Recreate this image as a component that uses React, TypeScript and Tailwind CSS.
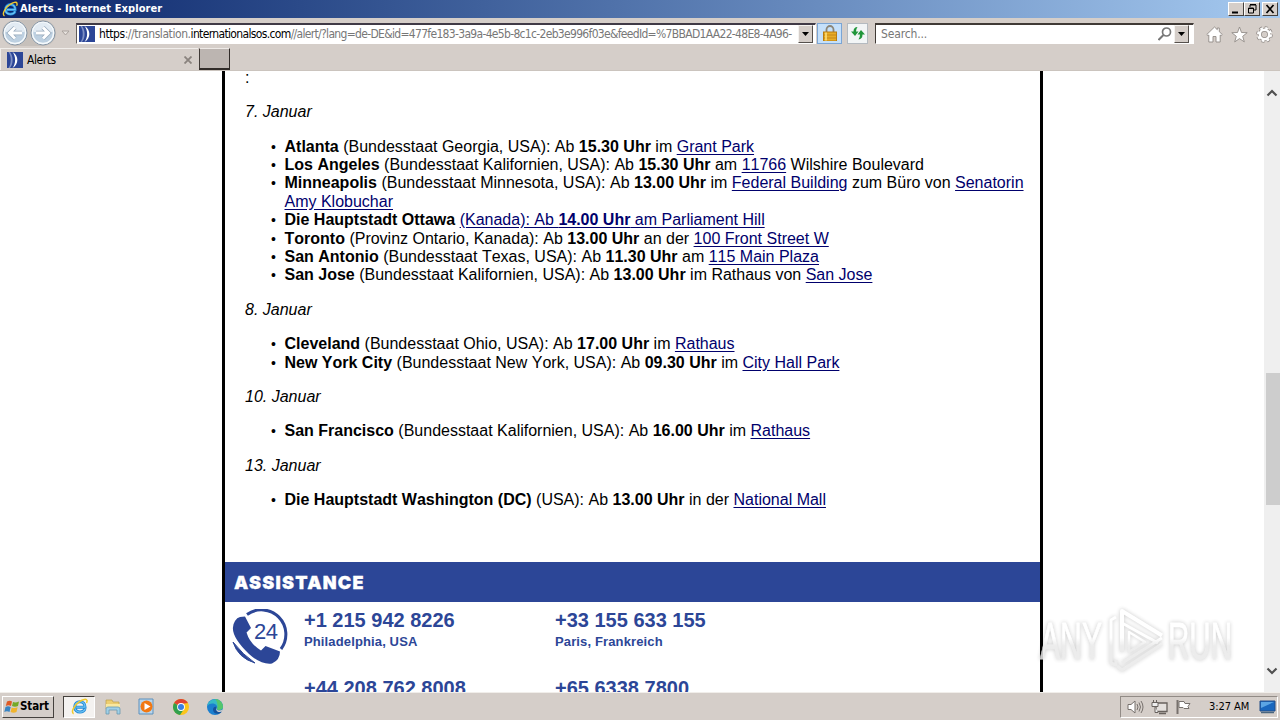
import React from "react";

const UI_FONT = "font-['DejaVu_Sans_Condensed','DejaVu_Sans',sans-serif] [font-stretch:condensed]";

const IeIcon = ({ className }: { className?: string }) => (
  <svg viewBox="0 0 16 16" className={className}>
    <path
      d="M13.2 10.3c-.8 1.8-2.5 2.9-4.7 2.9-3 0-5-2-5-4.7C3.500 5.500 5.600 3.500 8.500 3.500c3 0 4.800 2 4.700 5.100H5"
      fill="none"
      stroke="#2389d6"
      strokeWidth="2.800"
    />
    <path
      d="M13.2 10.3c-.8 1.8-2.5 2.9-4.7 2.9-3 0-5-2-5-4.7C3.500 5.500 5.600 3.500 8.500 3.500c3 0 4.800 2 4.700 5.100H5"
      fill="none"
      stroke="#6cc4f4"
      strokeWidth="1.200"
    />
    <path
      d="M2.500 14.800C-.5 13.500 2.800 7 8 3.500c3-2.200 6.500-3 7-1.300.3.800 0 1.700-.4 2.500"
      fill="none"
      stroke="#f1c92c"
      strokeWidth="1.400"
    />
  </svg>
);

const SosIcon = () => (
  <svg viewBox="0 0 16 16" className="size-4 shrink-0">
    <rect width="16" height="16" fill="#2c4697" />
    <path d="M3 0c3.500 4 3.500 12 0 16H1.500c3-4 3-12 0-16Z" fill="#7f90c4" />
    <path d="M5.500 0c6.500 3.500 6.500 12.500 0 16C9 11.500 9 4.500 5.500 0Z" fill="#fff" />
  </svg>
);

const NavArrow = ({ flip }: { flip?: boolean }) => (
  <svg viewBox="0 0 26 26" className={flip ? "size-[26px] -scale-x-100" : "size-[26px]"}>
    <circle cx="13" cy="13" r="12" fill="#dce5ed" stroke="#8796a5" />
    <circle cx="13" cy="13" r="10.500" fill="#bdd0e1" stroke="#f6fafc" strokeWidth="1.300" />
    <path d="M3.500 12a9.500 9.500 0 0 1 19 0Z" fill="#e2ebf3" />
    <path d="M13 7.500 7.500 13l5.500 5.500M8 13h12" fill="none" stroke="#96a9bb" strokeWidth="4.500" />
    <path d="M13 7.500 7.500 13l5.500 5.500M8 13h12" fill="none" stroke="#fff" strokeWidth="3" />
  </svg>
);

const DropButton = () => (
  <div className="flex h-[18px] w-[15px] shrink-0 items-center justify-center border border-t-[#f5f3f0] border-l-[#f5f3f0] border-r-[#55504c] border-b-[#55504c] bg-[#d5cec9]">
    <svg viewBox="0 0 7 4" className="h-1 w-[7px]">
      <path d="M0 0h7L3.500 4Z" fill="#000" />
    </svg>
  </div>
);

const WindowButton = ({ children }: { children: React.ReactNode }) => (
  <div className="flex h-[14px] w-4 items-center justify-center border border-t-white border-l-white border-r-[#45413d] border-b-[#45413d] bg-[#d5cec9]">
    <svg viewBox="0 0 12 12" className="size-3" fill="none" stroke="#000">
      {children}
    </svg>
  </div>
);

const TitleBar = () => (
  <div className="flex h-[18px] items-center bg-linear-to-r from-[#0c246a] to-[#a6caf0] pr-[2px] pl-[2px]">
    <IeIcon className="size-4" />
    <span className="mt-px ml-[2px] grow text-[11px] font-bold tracking-[0.080px] text-white">
      Alerts - Internet Explorer
    </span>
    <div className="flex">
      <WindowButton>
        <path d="M2 9.500h6" strokeWidth="2" />
      </WindowButton>
      <WindowButton>
        <path d="M4 4V2h6v5H8M4 1.500h6" />
        <path d="M2.500 5h5v5h-5ZM2 5.500h6" />
      </WindowButton>
      <div className="ml-[2px]">
        <WindowButton>
          <path d="m2.500 2 7 8M9.500 2l-7 8" strokeWidth="1.700" />
        </WindowButton>
      </div>
    </div>
  </div>
);

const Toolbar = () => (
  <div className="flex h-[30px] items-center bg-[#d5cec9] pl-[2px]">
    <div className="flex h-[26px] w-[54px] gap-[2px] rounded-full bg-[#c6c0bb]">
      <NavArrow />
      <NavArrow flip />
    </div>
    <svg viewBox="0 0 9 6" className="ml-[5px] h-[6px] w-[9px]">
      <path d="M1 1h7L4.500 5Z" fill="#e7e2de" stroke="#aaa39e" />
    </svg>
    <div className="ml-[6px] flex h-[21px] w-[740px] items-center border border-t-2 border-t-[#403a46] border-l-[#605b58] border-r-white border-b-white bg-white pl-[2px]">
      <SosIcon />
      <div className="ml-1 w-[699px] shrink-0 text-[12px] tracking-[-0.430px] whitespace-nowrap text-[#777]">
        <span className="text-black">https</span>://translation.
        <span className="tracking-[-0.650px] text-black">internationalsos.com</span>
        <span className="tracking-[-0.680px]">
          //alert/?lang=de-DE&amp;id=477fe183-3a9a-4e5b-8c1c-2eb3e996f03e&amp;feedId=%7BBAD1AA22-48E8-4A96-
        </span>
      </div>
      <DropButton />
    </div>
    <div className="ml-px flex h-[21px] w-[25px] items-center justify-center border border-[#7aa5d5] bg-[#c5e0fa]">
      <svg viewBox="0 0 14 16" className="h-4 w-[14px]">
        <path d="M3.500 8V4.500a3.500 3.500 0 0 1 7 0V8" fill="none" stroke="#8c8577" strokeWidth="1.800" />
        <rect x=".5" y="7" width="13" height="9" fill="#e9ad25" stroke="#b97d10" />
        <path d="M1 10h12M1 13h12" stroke="#c58719" />
        <path d="M3 7.500v8" stroke="#ffe482" strokeWidth="1.500" />
      </svg>
    </div>
    <div className="ml-[5px] flex size-[21px] items-center justify-center border border-[#b4bac0] bg-[#f2f5f6]">
      <svg viewBox="0 0 16 16" className="size-4">
        <path d="M7.500 2Q3.500 2 3.500 6.500H1L5 11 8.500 6.500H6Q6 4 7.500 2Z" fill="#20963a" />
        <path d="M8.500 14.500Q12.500 14 12.500 9.500H15L11 5 7.500 9.500H10Q10 12.500 8.500 14.500Z" fill="#20963a" />
      </svg>
    </div>
    <div className="ml-[7px] flex h-[21px] w-[319px] items-center border border-t-2 border-t-[#403a36] border-l-[#403a36] border-r-white border-b-white bg-white">
      <span className="ml-[5px] grow text-[12px] tracking-[-0.150px] text-[#777]">Search...</span>
      <svg viewBox="0 0 14 14" className="mr-[2px] size-[14px]" fill="none" stroke="#777">
        <circle cx="8.500" cy="5" r="4" strokeWidth="1.700" />
        <path d="m5.500 8-5 5" strokeWidth="2" />
      </svg>
      <DropButton />
      <div className="w-1" />
    </div>
    <div className="mt-[3px] ml-[12px] flex gap-[8px]">
      <svg viewBox="0 0 17 17" className="size-[17px]">
        <path
          d="M.8 8.500 8.500 1l2.800 2.700V2h2v3.700l3 2.800-1.200 1.200-.9-.7v7H10V10.500H7V16H2.800V9l-.8.700Z"
          fill="#fff"
          stroke="#918b87"
          strokeWidth=".9"
        />
      </svg>
      <svg viewBox="0 0 17 17" className="size-[17px]">
        <path
          d="m8.500 1 2 5.500 5.700.2-4.500 3.600 1.600 5.600-4.800-3.300-4.800 3.300 1.600-5.600L.8 6.700l5.700-.2Z"
          fill="#fff"
          stroke="#918b87"
          strokeWidth=".9"
        />
      </svg>
      <svg viewBox="0 0 17 17" className="size-[17px]" fill="none">
        <circle cx="8.500" cy="8.500" r="6.800" stroke="#918b87" strokeWidth="3" strokeDasharray="3 2.340" />
        <circle cx="8.500" cy="8.500" r="4.700" stroke="#918b87" strokeWidth="4" />
        <circle cx="8.500" cy="8.500" r="6.500" stroke="#fff" strokeWidth="2" strokeDasharray="2.600 2.505" />
        <circle cx="8.500" cy="8.500" r="4.700" stroke="#fff" strokeWidth="2.500" />
      </svg>
    </div>
  </div>
);

const TabBar = () => (
  <div className="flex h-[23px] border-b border-[#cbc4be] bg-[#d5cec9]">
    <div className="flex h-[22px] w-[198px] items-center border-t border-l border-[#f1eeeb] pl-[6px]">
      <SosIcon />
      <span className="ml-1 grow text-[12px] tracking-[-0.450px] text-black">Alerts</span>
      <svg viewBox="0 0 8 8" className="mr-[6px] size-2">
        <path d="m.5.5 7 7m0-7-7 7" stroke="#8a837e" strokeWidth="1.800" />
      </svg>
    </div>
    <div className="ml-px h-[22px] w-[31px] border border-t-[#eeeae7] border-l-[#403a36] border-r-[#302b28] border-b-2 border-b-[#302b28] bg-[#bcb5b1]" />
  </div>
);

type Stop = {
  city: string;
  region?: string;
  time?: string;
  body?: React.ReactNode;
};

const Link = ({ children }: { children: React.ReactNode }) => (
  <a className="text-[#00006c] underline underline-offset-2">{children}</a>
);

const schedule: { date: string; stops: Stop[] }[] = [
  {
    date: "7. Januar",
    stops: [
      { city: "Atlanta", region: "(Bundesstaat Georgia, USA)", time: "15.30 Uhr", body: <>im <Link>Grant Park</Link></> },
      {
        city: "Los Angeles",
        region: "(Bundesstaat Kalifornien, USA)",
        time: "15.30 Uhr",
        body: <>am <Link>11766</Link> Wilshire Boulevard</>,
      },
      {
        city: "Minneapolis",
        region: "(Bundesstaat Minnesota, USA)",
        time: "13.00 Uhr",
        body: <>im <Link>Federal Building</Link> zum Büro von <Link>Senatorin<br />Amy Klobuchar</Link></>,
      },
      {
        city: "Die Hauptstadt Ottawa",
        body: <Link>(Kanada): Ab <b>14.00 Uhr</b> am Parliament Hill</Link>,
      },
      { city: "Toronto", region: "(Provinz Ontario, Kanada)", time: "13.00 Uhr", body: <>an der <Link>100 Front Street W</Link></> },
      { city: "San Antonio", region: "(Bundesstaat Texas, USA)", time: "11.30 Uhr", body: <>am <Link>115 Main Plaza</Link></> },
      {
        city: "San Jose",
        region: "(Bundesstaat Kalifornien, USA)",
        time: "13.00 Uhr",
        body: <>im Rathaus von <Link>San Jose</Link></>,
      },
    ],
  },
  {
    date: "8. Januar",
    stops: [
      { city: "Cleveland", region: "(Bundesstaat Ohio, USA)", time: "17.00 Uhr", body: <>im <Link>Rathaus</Link></> },
      { city: "New York City", region: "(Bundesstaat New York, USA)", time: "09.30 Uhr", body: <>im <Link>City Hall Park</Link></> },
    ],
  },
  {
    date: "10. Januar",
    stops: [
      { city: "San Francisco", region: "(Bundesstaat Kalifornien, USA)", time: "16.00 Uhr", body: <>im <Link>Rathaus</Link></> },
    ],
  },
  {
    date: "13. Januar",
    stops: [
      { city: "Die Hauptstadt Washington (DC)", region: "(USA)", time: "13.00 Uhr", body: <>in der <Link>National Mall</Link></> },
    ],
  },
];

const Schedule = () => (
  <div className="-mt-[2.300px] h-[493.300px] shrink-0 pl-5 text-[16px] leading-[18.4px] text-black [font-kerning:none]">
    <p className="mb-4">:</p>
    {schedule.map((day) => (
      <React.Fragment key={day.date}>
        <p className="mb-4 italic">{day.date}</p>
        <ul className="mb-4 pl-[26px]">
          {day.stops.map((stop) => (
            <li key={stop.city} className="flex whitespace-nowrap">
              <span className="w-[13.500px] shrink-0 text-[14px]">•</span>
              <span>
                <b>{stop.city}</b> {stop.region && <>{stop.region}: Ab </>}
                {stop.time && <><b>{stop.time}</b> </>}
                {stop.body}
              </span>
            </li>
          ))}
        </ul>
      </React.Fragment>
    ))}
  </div>
);

const PhoneIcon = () => (
  <svg viewBox="0 0 56 56" className="-mt-px size-14">
    <path d="M15 5.500A24.500 24.500 0 0 1 49 40" fill="none" stroke="#2c4697" strokeWidth="3" />
    <path d="M1 33Q6 49 23 54Q11 46 1 33Z" fill="#2c4697" stroke="#2c4697" />
    <path
      d="M8 8 13 7.500 19 19 14.500 23.500Q18 35 29 41.500L33.500 37 48 42.500Q48 51 40 54.500Q29 56 17 45Q-5 24 3 12Q5 8.500 8 8Z"
      fill="#2c4697"
    />
    <text x="22" y="29.500" fontSize="22" fill="#2c4697" letterSpacing="-0.500">
      24
    </text>
  </svg>
);

const Contact = ({ phone, place }: { phone: string; place?: string }) => (
  <div className="h-[67.500px] w-[251px] font-bold text-[#2c4697] [font-kerning:none]">
    <div className="text-[20px] leading-[23px]">{phone}</div>
    <div className="text-[13px] leading-[20px] tracking-[0.130px]">{place}</div>
  </div>
);

const Assistance = () => (
  <div className="shrink-0">
    <div className="flex h-10 items-center bg-[#2c4697] pt-px pl-[9px] font-['Inter',sans-serif] text-[18px] font-black tracking-[1.250px] text-white">
      <span className="[-webkit-text-stroke:0.300px_white]">ASSISTANCE</span>
    </div>
    <div className="flex pt-2 pl-[7px]">
      <PhoneIcon />
      <div className="-mt-px ml-4 grid grid-cols-[251px_251px]">
        <Contact phone="+1 215 942 8226" place="Philadelphia, USA" />
        <Contact phone="+33 155 633 155" place="Paris, Frankreich" />
        <Contact phone="+44 208 762 8008" />
        <Contact phone="+65 6338 7800" />
      </div>
    </div>
  </div>
);

const ScrollBar = () => (
  <div className="flex w-4 shrink-0 flex-col items-center bg-[#efefef] pt-[18px] pb-[17px]">
    <svg viewBox="0 0 12 8" className="h-2 w-3" fill="none" stroke="#505050" strokeWidth="2.200">
      <path d="m1.500 6.500 4.500-4.500 4.500 4.500" />
    </svg>
    <div className="mt-[276px] ml-px h-[132px] w-[14px] bg-[#cdcdcd]" />
    <svg viewBox="0 0 12 8" className="mt-auto h-2 w-3" fill="none" stroke="#505050" strokeWidth="2.200">
      <path d="m1.500 1.500 4.500 4.500 4.500-4.500" />
    </svg>
  </div>
);

// Translucent mark lying over the page and its right border
const Watermark = () => (
  <svg
    viewBox="0 0 210 80"
    className="absolute top-[600px] left-[1034px] h-[80px] w-[210px] drop-shadow-[0_0_2px_rgba(0,0,0,0.25)]"
    fill="none"
    stroke="url(#fade)"
    strokeLinejoin="round"
    opacity=".85"
  >
    <defs>
      <linearGradient id="fade" gradientUnits="userSpaceOnUse" x1="0" y1="38" x2="0" y2="46">
        <stop offset="0" stopColor="#fff" />
        <stop offset="1" stopColor="#e9e9e9" />
      </linearGradient>
    </defs>
    <g fontSize="51" strokeWidth=".8" fill="url(#fade)" fontFamily="'Liberation Sans Narrow','Liberation Sans',sans-serif">
      <text x="6" y="59" textLength="62" lengthAdjust="spacingAndGlyphs">ANY</text>
      <text x="134" y="59" textLength="64" lengthAdjust="spacingAndGlyphs">RUN</text>
    </g>
    <path d="M88 52V11L128 35.500" strokeWidth="4" />
    <path d="M88 23 124 43" strokeWidth="3" />
    <path d="M128 38 88 63M128 44 88 70 83 66" strokeWidth="3" />
    <path d="M82 17 77 20V63L82 65V60" strokeWidth="3" />
    <path d="M95 32V52L111 42Z" strokeWidth="2.500" />
  </svg>
);

const TaskBar = () => (
  <div className="flex h-7 items-center border-t border-[#f1eeea] bg-[#d5cec9] pl-[2px]">
    <div className="flex h-[22px] w-[52px] items-center border border-t-white border-l-white border-r-[#45413d] border-b-[#45413d]">
      <svg viewBox="0 0 16 16" className="ml-px size-4 shrink-0">
        <path d="M3 2.500Q6 1 8 2.500L7 7Q4.500 5.700 1.800 7Z" fill="#df5a25" />
        <path d="M9 3Q11.500 4 15 2.500L14 7Q11 8.500 8 7Z" fill="#75a928" />
        <path d="M1.500 8Q4 6.700 6.700 8L5.500 13Q3 11.500.3 13Z" fill="#3884c3" />
        <path d="M7.700 8.500Q10.500 9.700 13.600 8.300L12.500 13Q9.500 14.500 6.600 13Z" fill="#f1b42c" />
      </svg>
      <span className="mt-px text-[11.500px] font-bold tracking-[-0.100px]">Start</span>
    </div>
    <div className="ml-[9px] flex h-[22px] w-8 items-center justify-center border border-t-[#45413d] border-l-[#45413d] border-r-white border-b-white bg-[#f4f2f0]">
      <IeIcon className="size-[17px]" />
    </div>
    <svg viewBox="0 0 18 18" className="ml-[9px] size-[18px]">
      <path d="M2 2h6l1 2h6v7H2Z" fill="#edce70" stroke="#bd9d49" strokeWidth=".7" />
      <path d="M2 6h14v6H2Z" fill="#f9e8a0" />
      <path d="M2 16v-5q0-2 2-2h10q2 0 2 2v5h-3v-4H5v4Z" fill="#9fd0e8" stroke="#6999b0" strokeWidth=".8" />
    </svg>
    <svg viewBox="0 0 18 18" className="ml-4 size-[18px]">
      <path d="M1 1h14v15H1Z" fill="#b9d5eb" stroke="#5c91bd" />
      <circle cx="8.500" cy="8.500" r="6" fill="#f27812" />
      <path d="m6.500 5 6 3.500-6 3.500Z" fill="#fff" />
    </svg>
    <svg viewBox="0 0 16 16" className="ml-[17px] size-4">
      <circle cx="8" cy="8" r="8" fill="#fbc51b" />
      <path d="M8 8 1.100 4A8 8 0 0 1 14.900 4L8 5Z" fill="#de4334" />
      <path d="M8 8 1.100 4A8 8 0 0 0 7 16l4-6Z" fill="#31a04e" />
      <circle cx="8" cy="8" r="3.900" fill="#fff" />
      <circle cx="8" cy="8" r="3" fill="#397fe3" />
    </svg>
    <svg viewBox="0 0 16 16" className="ml-[18px] size-4">
      <circle cx="8" cy="8" r="8" fill="#1b7fcf" />
      <path d="M.1 7A8 8 0 0 1 16 8c0 3-5 4-6 2 2-5-6-8-9.900-3Z" fill="#36b9c6" />
      <path d="M8 0a8 8 0 0 1 8 8c0 3-5 4-6 2 1-2 1-7-2-10Z" fill="#54c66c" />
      <path d="M9.500 8c-2 4 3 6 5.500 4.500-3 4-9 2.500-9-2C6 8.500 8 7 9.500 8Z" fill="#15529c" />
      <path d="M9.500 7.500c-1.500 4 3 5 6.500 3l-1.200 2c-3 1.500-7.300-.5-5.300-5Z" fill="#d5cec9" />
    </svg>
    <div className="mr-[2px] ml-auto flex h-[22px] items-center border border-t-[#928b86] border-l-[#928b86] border-r-white border-b-white pl-[6px]">
      <svg viewBox="0 0 17 16" className="h-4 w-[17px]" fill="none" stroke="#77716d">
        <path d="M1 5.500h3L8 2v12l-4-3.500H1Z" fill="#fff" />
        <path d="M10 5q2 3 0 6M12 3.500q3 4.500 0 9M14 2q4 6 0 12" />
      </svg>
      <svg viewBox="0 0 17 16" className="ml-[7px] h-4 w-[17px]" fill="none" stroke="#68625e">
        <path d="M5 4h11v8.500H5ZM8 14.500h7" fill="#e4e0dd" strokeWidth="1.300" />
        <path d="M2.500 1v2M5.500 1v2M1 3.500h6v4H1ZM4 8v5.500h3" fill="#eee" />
      </svg>
      <svg viewBox="0 0 17 16" className="ml-[7px] h-4 w-[17px]">
        <path d="M2.500 1v14" stroke="#77716d" strokeWidth="2" />
        <path d="M4 2.500h5l1 2h5l-2 3 1 2H9l-1-1H4Z" fill="#fff" stroke="#77716d" />
      </svg>
      <span className="mt-px ml-[17px] w-[42px] text-[11px] tracking-[-0.050px] whitespace-nowrap">3:27 AM</span>
      <svg viewBox="0 0 17 14" className="mr-px ml-2 h-[14px] w-[17px]">
        <path d="M1 1h15v10H1Z" fill="#1967be" stroke="#244f87" />
        <path d="M2 2h13L2 8Z" fill="#5ba5e4" />
        <path d="M2 12.500h13" stroke="#49657f" strokeWidth="1.500" />
      </svg>
    </div>
  </div>
);

export default function App() {
  return (
    <div className={`relative flex h-[720px] w-[1280px] flex-col overflow-hidden bg-white text-black ${UI_FONT}`}>
      <TitleBar />
      <Toolbar />
      <TabBar />
      <div className="flex h-[621px] shrink-0 overflow-hidden font-['Liberation_Sans',Arial,sans-serif]">
        <div className="flex grow overflow-hidden pl-[222px]">
          <div className="flex h-[621px] w-[821px] flex-col border-x-3 border-black">
            <Schedule />
            <Assistance />
          </div>
        </div>
        <ScrollBar />
      </div>
      <TaskBar />
      <Watermark />
    </div>
  );
}
